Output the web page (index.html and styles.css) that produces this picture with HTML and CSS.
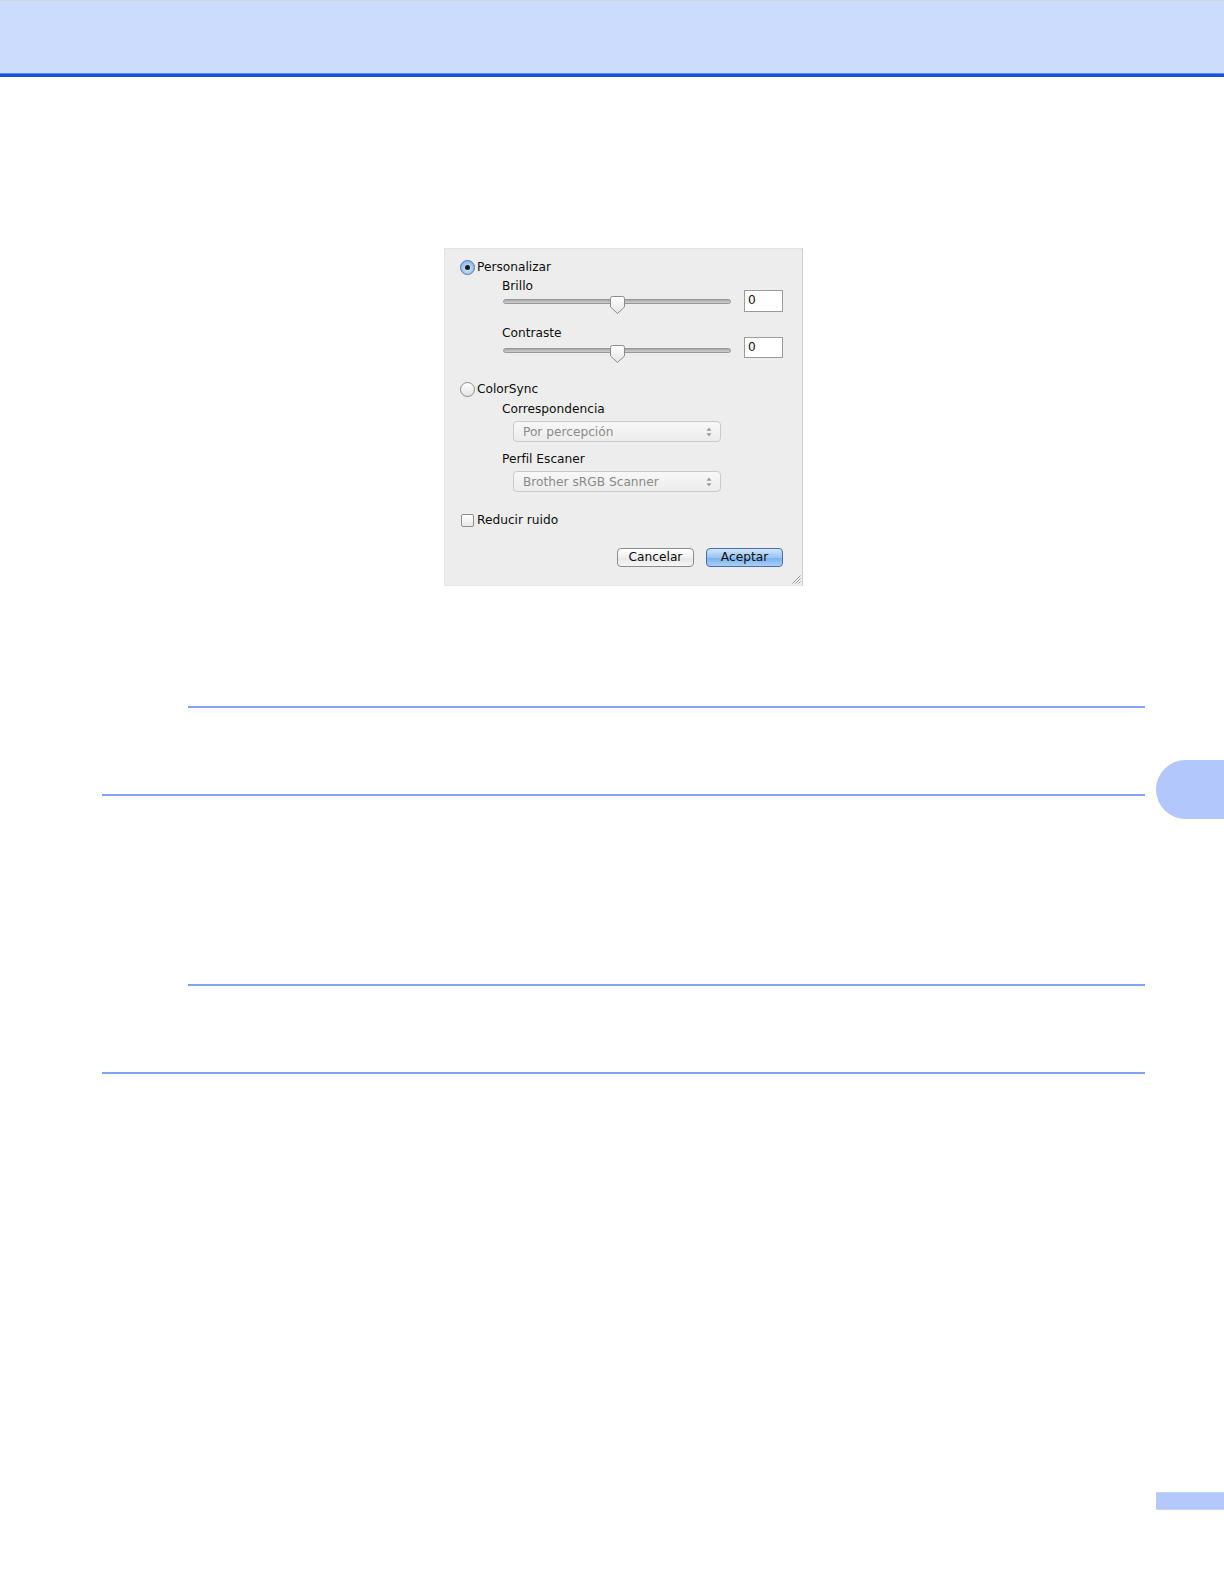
FILE: index.html
```html
<!DOCTYPE html>
<html lang="es">
<head>
<meta charset="utf-8">
<title>Ajustes de color</title>
<link rel="stylesheet" href="styles.css">
</head>
<body>
<div class="page">
  <header class="hdr"></header>
  <div class="hdr-rule"></div>

  <div class="dialog">
    <div class="opt">
      <span class="radio radio--on"><span class="dot"></span></span>
      <span class="opt-label">Personalizar</span>
    </div>
    <div class="group">
      <div class="slabel">Brillo</div>
      <div class="slider">
        <div class="track">
          <svg class="thumb" width="17" height="20" viewBox="0 0 17 20"><defs><linearGradient id="tg" x1="0" y1="0" x2="0" y2="1"><stop offset="0" stop-color="#ffffff"/><stop offset="1" stop-color="#e4e4e4"/></linearGradient></defs><path d="M1.5 3.5 Q1.5 1.5 3.5 1.5 H13.5 Q15.5 1.5 15.5 3.5 V12 L8.5 18.5 L1.5 12 Z" fill="url(#tg)" stroke="#8c8c8c" stroke-width="1"/></svg>
        </div>
        <div class="numbox">0</div>
      </div>
      <div class="slabel slabel--second">Contraste</div>
      <div class="slider slider--second">
        <div class="track track--low">
          <svg class="thumb" width="17" height="20" viewBox="0 0 17 20"><path d="M1.5 3.5 Q1.5 1.5 3.5 1.5 H13.5 Q15.5 1.5 15.5 3.5 V12 L8.5 18.5 L1.5 12 Z" fill="url(#tg)" stroke="#8c8c8c" stroke-width="1"/></svg>
        </div>
        <div class="numbox">0</div>
      </div>
    </div>

    <div class="opt opt--colorsync">
      <span class="radio"></span>
      <span class="opt-label">ColorSync</span>
    </div>
    <div class="group">
      <div class="plabel">Correspondencia</div>
      <div class="popup">
        <span>Por percepción</span>
        <svg class="arrows" width="6" height="10" viewBox="0 0 6 10"><path d="M3 0.5 L5.5 3.8 H0.5 Z M3 9.5 L5.5 6.2 H0.5 Z" fill="#9a9a9a"/></svg>
      </div>
      <div class="plabel plabel--second">Perfil Escaner</div>
      <div class="popup">
        <span>Brother sRGB Scanner</span>
        <svg class="arrows" width="6" height="10" viewBox="0 0 6 10"><path d="M3 0.5 L5.5 3.8 H0.5 Z M3 9.5 L5.5 6.2 H0.5 Z" fill="#9a9a9a"/></svg>
      </div>
    </div>

    <div class="opt opt--check">
      <span class="check"></span>
      <span class="opt-label">Reducir ruido</span>
    </div>

    <div class="buttons">
      <button class="btn">Cancelar</button>
      <button class="btn btn--default">Aceptar</button>
    </div>

    <svg class="grip" width="11" height="11" viewBox="0 0 11 11"><path d="M10.5 2.5 L2.5 10.5 M10.5 5.5 L5.5 10.5 M10.5 8.5 L8.5 10.5" stroke="#9c9c9c" stroke-width="1"/></svg>
  </div>

  <div class="rule rule--indent rule--first"></div>
  <div class="rule rule--full rule--gap1"></div>
  <div class="rule rule--indent rule--gap2"></div>
  <div class="rule rule--full rule--gap3"></div>

  <footer class="foot">
    <div class="pagenum"></div>
  </footer>

  <div class="side-tab"></div>
</div>
</body>
</html>
```

FILE: styles.css
```css
* { box-sizing: border-box; }

html, body {
  margin: 0;
  padding: 0;
  background: #ffffff;
}

.page {
  position: relative;
  width: 1224px;
  min-height: 1584px;
  font-family: "DejaVu Sans", "Liberation Sans", sans-serif;
  font-size: 12.2px;
  color: #0d0d0d;
}

.hdr {
  height: 73px;
  background: #ccdcfc;
  border-top: 1px solid #d2d6e2;
}

.hdr-rule {
  height: 4px;
  background: linear-gradient(#4f8ff3 0, #4f8ff3 1px, #1c50d2 1px, #1c50d2 100%);
}

/* dialog screenshot */
.dialog {
  position: relative;
  margin: 171px 0 0 444px;
  width: 359px;
  padding: 11px 19px 18px 15px;
  background: #ededed;
  border: 1px solid #e2e2e2;
  border-right-color: #cdcdcd;
  border-bottom-color: #e6e6e6;
}

.opt {
  display: flex;
  align-items: center;
  height: 15px;
}

.opt-label {
  margin-left: 2px;
  line-height: 15px;
  white-space: nowrap;
}

.opt--colorsync { margin-top: 24px; }
.opt--check { margin-top: 21px; }

.radio {
  position: relative;
  width: 15px;
  height: 15px;
  border-radius: 50%;
  border: 1px solid #8b8b8b;
  background: linear-gradient(#ffffff, #e4e4e4);
  flex: none;
}

.radio--on {
  border-color: #5676a8;
  background: radial-gradient(circle at 50% 60%, #d8e9fc 0, #a9ccf5 45%, #6ea5eb 100%);
}

.dot {
  position: absolute;
  left: 4px;
  top: 4px;
  width: 5px;
  height: 5px;
  border-radius: 50%;
  background: #1b1b1b;
}

.check {
  width: 13px;
  height: 13px;
  margin-left: 1px;
  margin-right: 1px;
  border: 1px solid #8d8d8d;
  border-radius: 2px;
  background: linear-gradient(#ffffff, #e8e8e8);
  flex: none;
}

.group {
  margin-left: 42px;
}

.slabel {
  margin-top: 5px;
  line-height: 12px;
}

.slabel--second { margin-top: 15px; }

.slider {
  display: flex;
  align-items: center;
  height: 22px;
  margin-top: -2px;
}

.slider--second {
  height: 21px;
  margin-top: -2px;
}

.track {
  position: relative;
  width: 228px;
  height: 5px;
  margin-left: 1px;
  border-radius: 3px;
  border: 1px solid #979797;
  background: linear-gradient(#a9a9a9, #cfcfcf);
}

.track--low { margin-top: 6px; }

.thumb {
  position: absolute;
  left: 105px;
  top: -5px;
}

.numbox {
  width: 39px;
  height: 100%;
  margin-left: 13px;
  padding-left: 3px;
  border: 1px solid #9b9b9b;
  background: #ffffff;
  line-height: 19px;
}

.plabel {
  margin-top: 5px;
  line-height: 15px;
}

.plabel--second { margin-top: 10px; }

.popup {
  display: flex;
  align-items: center;
  justify-content: space-between;
  width: 208px;
  height: 21px;
  margin: 4px 0 0 11px;
  padding: 0 8px 0 9px;
  border: 1px solid #cacaca;
  border-radius: 4px;
  background: linear-gradient(#f8f8f8, #ececec);
  color: #8a8a8a;
}

.buttons {
  display: flex;
  justify-content: flex-end;
  gap: 12px;
  margin-top: 20px;
}

.btn {
  width: 77px;
  height: 19px;
  padding: 0;
  font: inherit;
  line-height: 17px;
  color: #0d0d0d;
  border: 1px solid #8c8c8c;
  border-radius: 4px;
  background: linear-gradient(#ffffff, #f1f1f1 50%, #e6e6e6 51%, #f6f6f6);
}

.btn--default {
  border-color: #4d6ea8;
  background: linear-gradient(#cfe3fb, #9cc6f3 50%, #78b0ef 51%, #a9d0f7);
}

.grip {
  position: absolute;
  right: 1px;
  bottom: 1px;
}

/* separator rules */
.rule {
  height: 2px;
  margin-right: 79px;
  background: #80a4ef;
}

.rule--indent { margin-left: 188px; }
.rule--full { margin-left: 102px; }

.rule--first { margin-top: 120px; }
.rule--gap1 { margin-top: 86px; }
.rule--gap2 { margin-top: 188px; }
.rule--gap3 { margin-top: 86px; }

.foot {
  display: flex;
  justify-content: flex-end;
  margin-top: 418px;
}

.pagenum {
  width: 68px;
  height: 18px;
  background: #b4c8fb;
  border-top: 1px solid #c7d5fc;
  border-bottom: 1px solid #c7d5fc;
}

.side-tab {
  position: absolute;
  top: 760px;
  right: 0;
  width: 68px;
  height: 59px;
  border-radius: 30px 0 0 30px;
  background: #b2c7fb;
}
```
